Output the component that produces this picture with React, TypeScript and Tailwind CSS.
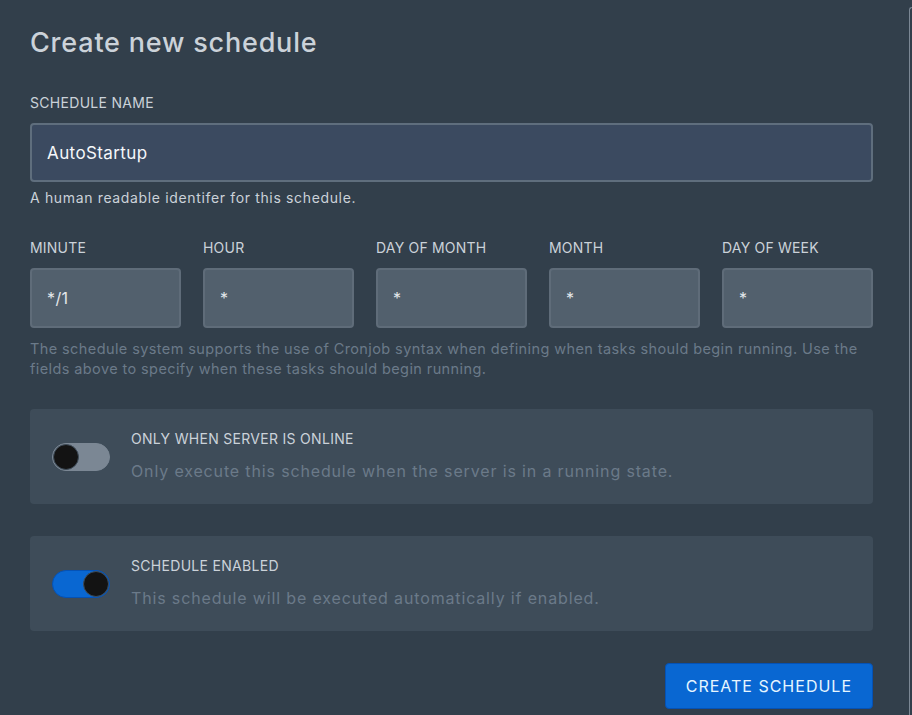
import { useState } from 'react';

const cronFields = [
    { label: 'Minute', value: '*/1' },
    { label: 'Hour', value: '*' },
    { label: 'Day of month', value: '*' },
    { label: 'Month', value: '*' },
    { label: 'Day of week', value: '*' },
];

function Toggle({ on }: { on: boolean }) {
    return (
        <div
            className={`relative w-[58px] h-[28px] rounded-full border flex-shrink-0 ${
                on ? 'bg-[#0967d2] border-[#0552b5]' : 'bg-[#7b8794] border-[#7b8794]'
            }`}
        >
            <span
                className={`absolute top-[0px] w-[26px] h-[26px] rounded-full bg-[#131313] border border-[#3e4c59] ${
                    on ? 'right-[0px]' : 'left-[0px]'
                }`}
            />
        </div>
    );
}

function SwitchCard({ on, title, description }: { on: boolean; title: string; description: string }) {
    return (
        <div className="flex items-center gap-[21px] bg-[#3e4c59] rounded px-[22px] h-[95px]">
            <Toggle on={on} />
            <div className="flex flex-col gap-[14px] -mt-[2px]">
                <span className="text-[14px] leading-4 tracking-[0.3px] text-[#cbd2d9] uppercase">{title}</span>
                <span className="text-[16px] leading-5 text-[#6b7a89] tracking-[0.85px]">{description}</span>
            </div>
        </div>
    );
}

export default function App() {
    const [name, setName] = useState('AutoStartup');

    return (
        <div className="w-[912px] h-[715px] bg-[#323f4b] flex overflow-hidden" style={{ fontFamily: 'Inter, "Noto Sans", sans-serif' }}>
            <div className="flex-1 pl-[30px] pr-[36px] pt-[27px]">
                <h2 className="text-[27px] leading-8 font-medium text-[#cbd2d9] tracking-[0.8px]">Create new schedule</h2>

                {/* Schedule name */}
                <div className="mt-[36px]">
                    <label className="block text-[14px] leading-4 text-[#cbd2d9] uppercase tracking-[0.3px]">Schedule name</label>
                    <input
                        value={name}
                        onChange={(e) => setName(e.target.value)}
                        className="mt-[12px] w-full h-[59px] px-[15px] bg-[#3b4a60] border-2 border-[#5f6e7d] rounded text-[17px] tracking-[0.4px] text-[#f5f7fa] outline-none"
                    />
                    <p className="mt-[6px] text-[14px] leading-5 text-[#cbd2d9] tracking-[0.65px]">A human readable identifer for this schedule.</p>
                </div>

                {/* Cron fields */}
                <div className="mt-[32px] grid grid-cols-5 gap-[22px]">
                    {cronFields.map((f) => (
                        <div key={f.label}>
                            <label className="block text-[14px] leading-4 text-[#cbd2d9] uppercase tracking-[0.2px]">{f.label}</label>
                            <input
                                defaultValue={f.value}
                                className="mt-[12px] w-full h-[60px] px-[15px] bg-[#52606d] border-2 border-[#5f6c79] rounded text-[16px] tracking-[0.4px] text-[#e4e7eb] outline-none"
                            />
                        </div>
                    ))}
                </div>
                <p className="mt-[11px] text-[14.5px] leading-5 text-[#6b7a89] tracking-[0.4px]">
                    The schedule system supports the use of Cronjob syntax when defining when tasks should begin running. Use the fields above to specify when these tasks should begin running.
                </p>

                <div className="mt-[30px] flex flex-col gap-[32px]">
                    <SwitchCard
                        on={false}
                        title="Only when server is online"
                        description="Only execute this schedule when the server is in a running state."
                    />
                    <SwitchCard
                        on={true}
                        title="Schedule enabled"
                        description="This schedule will be executed automatically if enabled."
                    />
                </div>

                <div className="mt-[32px] flex justify-end">
                    <button className="h-[46px] px-[20px] bg-[#0967d2] border border-[#0552b5] rounded text-[16px] tracking-[1px] text-[#e6f6ff] uppercase">
                        Create schedule
                    </button>
                </div>
            </div>
            {/* edge of the underlying panel */}
            <div className="w-[3px] mt-[7px] border-l border-t border-[#7b8794] rounded-tl-[5px]" />
        </div>
    );
}
